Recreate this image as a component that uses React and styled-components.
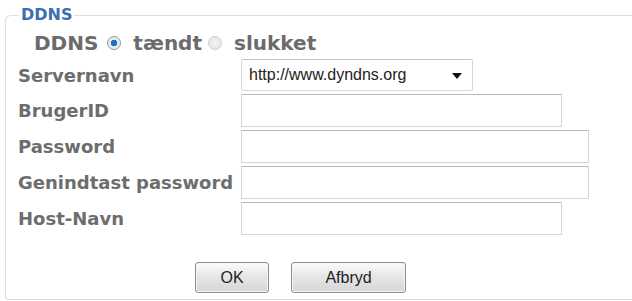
import React, { useState } from 'react';
import styled, { createGlobalStyle } from 'styled-components';

const Global = createGlobalStyle`
  html, body {
    margin: 0;
    padding: 0;
    background: #fff;
  }
  body {
    width: 632px;
    height: 301px;
    overflow: hidden;
    font-family: "DejaVu Sans", Verdana, sans-serif;
  }
`;

const Frame = styled.fieldset`
  box-sizing: border-box;
  margin: 15px 0 0 5px;
  width: 627px;
  height: 285px;
  padding: 12px 0 0 12px;
  border: 1px solid #dedede;
  border-right: none;
  border-radius: 6px 0 0 4px;
  position: relative;
`;

const Legend = styled.legend`
  position: absolute;
  top: -10px;
  left: 13px;
  padding: 0 2px;
  background: #fff;
  font-size: 16px;
  font-weight: bold;
  line-height: 18px;
  color: #3b6fb0;
`;

const SwitchRow = styled.div`
  display: flex;
  align-items: center;
  height: 30px;
  padding-left: 16px;
  font-size: 20px;
  font-weight: bold;
  color: #6b6b6b;
`;

const SwitchLabel = styled.span`
  margin-right: ${p => p.$gap || 0}px;
`;

const Radio = styled.span`
  box-sizing: border-box;
  display: inline-block;
  flex: none;
  width: 14px;
  height: 14px;
  border-radius: 50%;
  margin: 0 12px 0 ${p => p.$left || 0}px;
  border: 1px solid ${p => (p.$on ? '#8a9aa8' : '#cfcfcf')};
  background: ${p =>
    p.$on
      ? 'radial-gradient(circle, #2d6db3 0 3px, #dfe8f0 3.5px, #f4f6f8 100%)'
      : 'radial-gradient(circle, #f2f2f2 0, #e2e2e2 100%)'};
  cursor: pointer;
`;

const Form = styled.div`
  display: grid;
  grid-template-columns: 223px 1fr;
  row-gap: 3px;
  align-items: center;
  margin-top: 1px;
`;

const Label = styled.div`
  font-size: 18px;
  font-weight: bold;
  color: #6d6d6d;
  white-space: nowrap;
`;

const Field = styled.input`
  box-sizing: border-box;
  width: ${p => p.$w}px;
  height: 33px;
  margin: 0;
  padding: 0 6px;
  border: 1px solid #d4d4d4;
  border-top-color: #b9b9b9;
  border-radius: 1px;
  background: #fff;
  font-family: "Liberation Sans", Arial, sans-serif;
  font-size: 16px;
  outline: none;
`;

const Select = styled.div`
  box-sizing: border-box;
  width: 232px;
  height: 32px;
  display: flex;
  align-items: center;
  justify-content: space-between;
  padding: 0 10px 0 7px;
  border: 1px solid #d8d8d8;
  border-top-color: #c4c4c4;
  border-radius: 2px;
  background: #fff;
  font-family: "Liberation Sans", Arial, sans-serif;
  font-size: 16px;
  color: #222;
`;

const Caret = styled.span`
  width: 0;
  height: 0;
  border-left: 5px solid transparent;
  border-right: 5px solid transparent;
  border-top: 6px solid #111;
  margin-top: 2px;
`;

const Buttons = styled.div`
  display: flex;
  gap: 22px;
  padding-left: 177px;
  margin-top: 27px;
`;

const Button = styled.button`
  box-sizing: border-box;
  width: ${p => p.$w}px;
  height: 31px;
  border: 1px solid #8c8c8c;
  border-radius: 3px;
  background: linear-gradient(#fbfbfb, #e3e3e3 55%, #d6d6d6);
  font-family: "Liberation Sans", Arial, sans-serif;
  font-size: 16px;
  color: #222;
  padding: 0;
  box-shadow: inset 0 0 0 1px #f6f6f6;
`;

const fields = [
  { label: 'BrugerID', w: 321 },
  { label: 'Password', w: 348 },
  { label: 'Genindtast password', w: 348 },
  { label: 'Host-Navn', w: 321 },
];

export default function App() {
  const [on, setOn] = useState(true);

  return (
    <>
      <Global />
      <Frame>
        <Legend>DDNS</Legend>
        <SwitchRow>
          <SwitchLabel $gap={9}>DDNS</SwitchLabel>
          <Radio $on={on} onClick={() => setOn(true)} />
          <SwitchLabel>tændt</SwitchLabel>
          <Radio $on={!on} $left={6} onClick={() => setOn(false)} />
          <SwitchLabel>slukket</SwitchLabel>
        </SwitchRow>
        <Form>
          <Label>Servernavn</Label>
          <Select>
            <span>http://www.dyndns.org</span>
            <Caret />
          </Select>
          {fields.map(f => (
            <React.Fragment key={f.label}>
              <Label>{f.label}</Label>
              <Field $w={f.w} type={f.label.includes('assword') ? 'password' : 'text'} />
            </React.Fragment>
          ))}
        </Form>
        <Buttons>
          <Button $w={74}>OK</Button>
          <Button $w={115}>Afbryd</Button>
        </Buttons>
      </Frame>
    </>
  );
}
